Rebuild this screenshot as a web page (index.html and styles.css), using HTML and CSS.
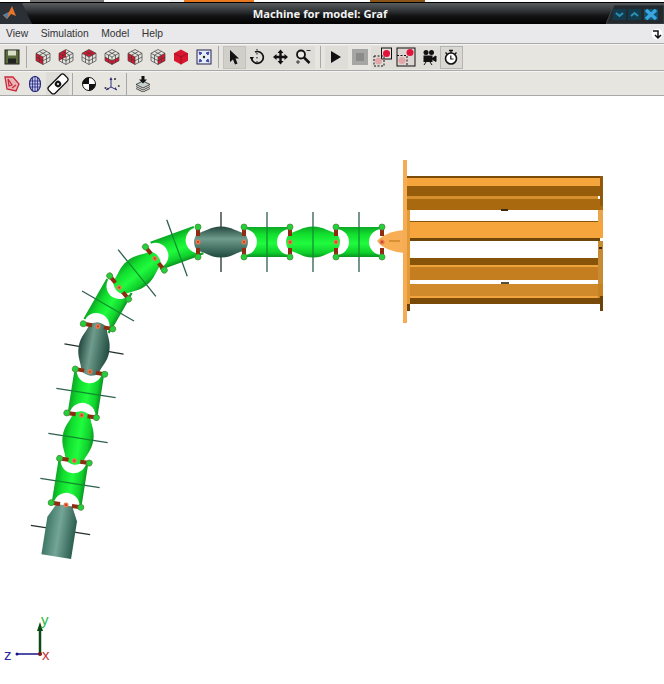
FILE: index.html
```html
<!DOCTYPE html>
<html lang="en">
<head>
<meta charset="utf-8">
<title>Machine for model: Graf</title>
<link rel="stylesheet" href="styles.css">
</head>
<body>
<svg class="sprites" aria-hidden="true">
  <defs>
    <symbol id="wire" viewBox="0 0 16 16">
      <path d="M8 .5 15 4.300V11.700L8 15.500 1 11.700V4.300ZM1 4.300 8 8 15 4.300M8 8V15.500M4.500 2.400 11.500 6.200M11.500 2.400 4.500 6.200M4.500 6.200V13.600M11.500 6.200V13.600M1 8 8 11.700 15 8" fill="none" stroke="#3d3d3d" stroke-width=".7"/>
    </symbol>
  </defs>
</svg>

<div class="strip">
  <span class="s s1"></span><span class="s s2"></span><span class="s s3"></span><span class="s s4"></span><span class="s s5"></span><span class="s s6"></span><span class="s s7"></span>
</div>
<header class="titlebar">
  <div class="logo">
    <svg width="32" height="21" viewBox="0 0 32 21"><path d="M0 0H22L32 21H0Z" fill="#2b3036"/><path d="M3 12 9 9 12 3 16 13 11 11 7 16Z" fill="#e8742a"/><path d="M3 12 9 9 7 16Z" fill="#4f7fa6"/></svg>
  </div>
  <div class="title">Machine for model: Graf</div>
  <div class="winbtns">
    <svg width="58" height="21" viewBox="0 0 58 21"><path d="M0 21 8 2H58V21Z" fill="#23292d" stroke="#4c5256" stroke-width=".8"/><rect x="7" y="6" width="13" height="11" fill="#123c4e"/><path d="M10 10 13.500 13 17 10" fill="none" stroke="#2d8fb5" stroke-width="2"/><rect x="22" y="6" width="13" height="11" fill="#123c4e"/><path d="M25 13 28.500 10 32 13" fill="none" stroke="#2d8fb5" stroke-width="2"/><rect x="38" y="6" width="14" height="11" fill="#12506c"/><path d="M40 7 50 16M50 7 40 16" stroke="#3aa6df" stroke-width="3.500"/></svg>
  </div>
</header>

<nav class="menubar">
  <span class="menu">View</span><span class="menu">Simulation</span><span class="menu">Model</span><span class="menu">Help</span>
  <svg class="dock" width="12" height="12" viewBox="0 0 12 12"><circle cx="6" cy="6" r="5.500" fill="#fff"/><path d="M2 3H7V9M4 7 7 10 10 7" fill="none" stroke="#111" stroke-width="1.500"/></svg>
</nav>

<div class="toolbar row1">
  <button class="tool"><svg viewBox="0 0 16 16"><rect x="1" y="1" width="14" height="14" fill="#5b6b3a" stroke="#222"/><rect x="4" y="1.500" width="8" height="5" fill="#d9e0c6"/><rect x="4" y="9.500" width="8" height="5" fill="#222"/></svg></button>
  <span class="sep"></span>
  <button class="tool"><svg viewBox="0 0 16 16"><path d="M8 .5 15 4.300V11.700L8 15.500 1 11.700V4.300Z" fill="#e3e3de"/><path d="M1 4.300 8 8V15.500L1 11.700Z" class="red"/><use href="#wire"/></svg></button>
  <button class="tool"><svg viewBox="0 0 16 16"><path d="M8 .5 15 4.300V11.700L8 15.500 1 11.700V4.300Z" fill="#e3e3de"/><path d="M8 .5 1 4.300V11.700L8 8Z" class="red"/><use href="#wire"/></svg></button>
  <button class="tool"><svg viewBox="0 0 16 16"><path d="M8 .5 15 4.300V11.700L8 15.500 1 11.700V4.300Z" fill="#e3e3de"/><path d="M8 .5 15 4.300 8 8 1 4.300Z" class="red"/><use href="#wire"/></svg></button>
  <button class="tool"><svg viewBox="0 0 16 16"><path d="M8 .5 15 4.300V11.700L8 15.500 1 11.700V4.300Z" fill="#e3e3de"/><path d="M1 8 8 11.700 15 8V11.700L8 15.500 1 11.700Z" class="red"/><use href="#wire"/></svg></button>
  <button class="tool"><svg viewBox="0 0 16 16"><path d="M8 .5 15 4.300V11.700L8 15.500 1 11.700V4.300Z" fill="#e3e3de"/><path d="M1 4.300 8 8V15.500L1 11.700Z" class="red"/><use href="#wire"/></svg></button>
  <button class="tool"><svg viewBox="0 0 16 16"><path d="M8 .5 15 4.300V11.700L8 15.500 1 11.700V4.300Z" fill="#e3e3de"/><path d="M15 4.300 8 8V15.500L15 11.700Z" class="red"/><use href="#wire"/></svg></button>
  <button class="tool"><svg viewBox="0 0 16 16"><path d="M8 .5 15 4.300V11.700L8 15.500 1 11.700V4.300Z" fill="#d8172f"/><path d="M1 4.300 8 8 15 4.300M8 8V15.500" fill="none" stroke="#8f1020" stroke-width=".8"/></svg></button>
  <button class="tool"><svg viewBox="0 0 16 16"><rect x="1" y="1" width="14" height="14" fill="#e8ecf4" stroke="#23234e"/><path d="M3 3 6 4 4 6ZM13 3 10 4 12 6ZM3 13 4 10 6 12ZM13 13 12 10 10 12Z" fill="#3c4fb0" stroke="#3c4fb0"/><circle cx="8" cy="8" r="1.200" fill="#222"/></svg></button>
  <span class="sep"></span>
  <button class="tool pressed"><svg viewBox="0 0 16 16"><path d="M3 1 12 9.500H8.500L10.500 14.500 8 15.500 6 10.500 3 13Z" fill="#111"/></svg></button>
  <button class="tool hint"><svg viewBox="0 0 16 16"><path d="M1.500 9A5.900 5.900 0 1 0 5 3" fill="none" stroke="#111" stroke-width="1.700"/><path d="M-.5 8H4L1.700 11.500Z" fill="#111"/><path d="M7 0V16" stroke="#111" stroke-dasharray="1.500 2.500"/></svg></button>
  <button class="tool hint"><svg viewBox="0 0 16 16"><path d="M7.500 .5 10.500 4H8.700V6.800H11.500V5L15 8 11.500 11V9.200H8.700V12H10.500L7.500 15.500 4.500 12H6.300V9.200H3.500V11L0 8 3.500 5V6.800H6.300V4H4.500Z" fill="#111"/></svg></button>
  <button class="tool hint"><svg viewBox="0 0 16 16"><circle cx="5" cy="5.500" r="4" fill="#e8e8e4" stroke="#111" stroke-width="1.800"/><path d="M8 8.500 13.500 14" stroke="#111" stroke-width="2.500"/><path d="M0 13H4M2 11V15M10.500 1.500H14.500" stroke="#333"/></svg></button>
  <span class="sep wide"></span>
  <button class="tool hint"><svg viewBox="0 0 16 16"><path d="M2 2 12 8 2 14Z" fill="#111"/></svg></button>
  <button class="tool"><svg viewBox="0 0 16 16"><rect x="0" y="0" width="16" height="16" fill="#a6a6a4"/><rect x="4" y="4" width="8" height="8" fill="#8b8b8a"/></svg></button>
  <button class="tool hint"><svg viewBox="0 0 20 20"><rect x="8.500" y="1" width="10" height="11" fill="#e6dcd8" stroke="#111"/><circle cx="13.500" cy="6.500" r="3.500" fill="#e3123a"/><rect x="1" y="9" width="10" height="10" fill="none" stroke="#111" stroke-dasharray="2 1.500"/><circle cx="5.500" cy="14" r="3.500" fill="#e2a6a8"/></svg></button>
  <button class="tool hint"><svg viewBox="0 0 20 20"><rect x="1" y="1" width="18" height="18" fill="#dcd6d2" stroke="#111"/><circle cx="14" cy="5.500" r="3.500" fill="#e3123a"/><path d="M1 8.500H11V19" fill="none" stroke="#111" stroke-dasharray="2 1.500"/><circle cx="6" cy="13.500" r="3.500" fill="#e2a6a8"/></svg></button>
  <button class="tool hint"><svg viewBox="0 0 16 16"><circle cx="5" cy="3.500" r="2.500" fill="#111"/><circle cx="10.500" cy="3.500" r="2.500" fill="#111"/><rect x="2.500" y="6.500" width="9" height="6.500" fill="#111"/><path d="M11.500 9 15 7V12.500L11.500 10.500ZM5 13 3 16M9 13 11 16" fill="#111" stroke="#111"/></svg></button>
  <button class="tool framed"><svg viewBox="0 0 16 16"><circle cx="7" cy="9.500" r="5.500" fill="#fff" stroke="#111" stroke-width="1.600"/><path d="M5 1.500H9M7 2V4M1.500 3.500 3 5M12.500 3.500 11 5" stroke="#111" stroke-width="1.300"/><path d="M6.800 6.500V10H9.500" fill="none" stroke="#111" stroke-width="1.200"/></svg></button>
</div>

<div class="toolbar row2">
  <button class="tool"><svg viewBox="0 0 16 16"><path d="M1 1H9L15 8 12 15 3 13Z" fill="#eab4b4" stroke="#c9283c" stroke-width="1.300"/><path d="M4 3 8 9 5 10ZM8 12 12 9" fill="none" stroke="#c9283c" stroke-width="1.200"/></svg></button>
  <button class="tool"><svg viewBox="0 0 16 16"><ellipse cx="8" cy="8" rx="5.500" ry="7.500" fill="#c9cff0" stroke="#23237a" stroke-width="1.100"/><path d="M2.500 5H13.500M2.500 8H13.500M2.500 11H13.500M5.500 1.500V14.500M8 .5V15.500M10.500 1.500V14.500" fill="none" stroke="#23237a" stroke-width=".8"/></svg></button>
  <button class="tool hint wide-ico"><svg viewBox="0 0 22 22"><g transform="rotate(-45 11 11)"><rect x="0" y="6.500" width="22" height="9" rx="2.500" fill="#fff" stroke="#111" stroke-width="1.300"/><circle cx="11" cy="11" r="3.200" fill="#111"/><circle cx="11" cy="11" r="1.200" fill="#ddd"/></g></svg></button>
  <span class="sep"></span>
  <button class="tool"><svg viewBox="0 0 16 16"><circle cx="8" cy="8" r="6.500" fill="#fff"/><path d="M8 1.500A6.500 6.500 0 0 0 1.500 8H8ZM8 8V14.500A6.500 6.500 0 0 0 14.500 8Z" fill="#111"/><circle cx="8" cy="8" r="6.500" fill="none" stroke="#111"/></svg></button>
  <button class="tool"><svg viewBox="0 0 16 16"><path d="M7 2.500V11L2 14M7 11 13 14" fill="none" stroke="#30307a"/><path d="M7 1 5.500 4H8.500ZM2 14 4 11.500 5 13.500ZM13 14 10.500 13 11.500 11Z" fill="#30307a"/><path d="M10 2 12 4M12 2 10 4M14 9 15.500 11M15.500 9 14 11" stroke="#333" stroke-width=".8"/><circle cx="1.500" cy="12" r="1" fill="#333"/></svg></button>
  <span class="sep"></span>
  <button class="tool"><svg viewBox="0 0 16 16"><path d="M8 5 15 8.500 8 12 1 8.500Z" fill="#c8d0d0" stroke="#222" stroke-width=".8"/><path d="M1 10.500 8 14 15 10.500M1 12.500 8 16 15 12.500" fill="none" stroke="#222" stroke-width=".8"/><path d="M6.500 0H9.500V3.500H12L8 7.500 4 3.500H6.500Z" fill="#111"/></svg></button>
</div>

<main class="viewport">
  <svg class="scene" viewBox="0 96 664 588" width="664" height="588">
    <defs>
      <linearGradient id="green" x1="0" y1="0" x2="0" y2="1">
        <stop offset="0" stop-color="#0ca826"/>
        <stop offset=".25" stop-color="#12e02e"/>
        <stop offset=".55" stop-color="#20fb3e"/>
        <stop offset=".85" stop-color="#10d02c"/>
        <stop offset="1" stop-color="#0a9422"/>
      </linearGradient>
      <linearGradient id="teal" x1="0" y1="0" x2="0" y2="1">
        <stop offset="0" stop-color="#24473f"/>
        <stop offset=".4" stop-color="#6f9c8c"/>
        <stop offset="1" stop-color="#1f4a3e"/>
      </linearGradient>
      <linearGradient id="tealside" x1="0" y1="0" x2="1" y2="0">
        <stop offset="0" stop-color="#3f7766"/>
        <stop offset=".45" stop-color="#74a596"/>
        <stop offset="1" stop-color="#2c5e50"/>
      </linearGradient>
      <g id="joint">
        <path d="M0-13V-6M0 6V13" stroke="#8e2c10" stroke-width="4"/>
        <circle cx="0" cy="-15" r="3" fill="#22d03a" stroke="#4a8a3a" stroke-width=".8"/>
        <circle cx="0" cy="15" r="3" fill="#22d03a" stroke="#4a8a3a" stroke-width=".8"/>
        <circle cx="0" cy="0" r="2.500" fill="#e4794f"/>
        <circle cx="0" cy="0" r="1" fill="#c23a1c"/>
      </g>
      <path id="linkbody" d="M-23-15H23V-13A13 13 0 0 0 23 13V15H-23V13A13 13 0 0 0-23-13Z"/>
      <path id="bulgebody" d="M-23-9C-16-10-11-15.500 0-15.500 11-15.500 16-10 23-9Q27-5 27 0 27 5 23 9C16 10 11 15.500 0 15.500-11 15.500-16 10-23 9Q-27 5-27 0-27-5-23-9Z"/>
      <g id="link">
        <path d="M0-30V30" class="axle"/>
        <use href="#linkbody" fill="url(#green)"/>
        <path d="M0-15V15" class="axle-in"/>
      </g>
      <g id="bulge">
        <path d="M0-30V30" class="axle"/>
        <use href="#bulgebody" fill="url(#green)"/>
        <path d="M0-15V15" class="axle-in"/>
        <use href="#joint" x="-23"/>
        <use href="#joint" x="23"/>
      </g>
      <g id="bulgedark">
        <path d="M0-30V30" class="axle dark"/>
        <use href="#bulgebody" fill="url(#teal)"/>
        <use href="#joint" x="-23"/>
        <use href="#joint" x="23"/>
      </g>
    </defs>

    <!-- gripper -->
    <path d="M377 241C382 235 392 231 405 230V253C392 252 382 248 377 241Z" fill="#f7ae55"/>
    <rect x="389" y="240" width="11" height="2" fill="#d98f35"/>
    <rect x="403" y="160" width="4" height="163" fill="#f4ad55"/>
    <rect x="407" y="176" width="196" height="2" fill="#7a4c08"/>
    <rect x="407" y="178" width="196" height="8" fill="#f5a53c"/>
    <rect x="407" y="186" width="196" height="10" fill="#955d0b"/>
    <rect x="407" y="196" width="191" height="3" fill="#d68f2c"/>
    <rect x="407" y="199" width="196" height="11" fill="#a9690f"/>
    <rect x="410" y="221" width="188" height="1" fill="#8a560a"/>
    <rect x="407" y="222" width="196" height="16" fill="#f5a53c"/>
    <rect x="410" y="238" width="190" height="3" fill="#6f4508"/>
    <rect x="410" y="258" width="190" height="7" fill="#87540a"/>
    <rect x="407" y="265" width="196" height="2" fill="#eea33c"/>
    <rect x="407" y="267" width="196" height="13" fill="#c47e1f"/>
    <rect x="410" y="284" width="190" height="12" fill="#d08a2b"/>
    <rect x="407" y="296" width="196" height="2" fill="#f2a53f"/>
    <rect x="407" y="298" width="196" height="6" fill="#7a4a08"/>
    <rect x="407" y="210" width="3" height="94" fill="#e39a36"/>
    <rect x="598" y="210" width="5" height="12" fill="#e9a548"/>
    <rect x="600" y="176" width="3" height="30" fill="#91590b"/>
    <rect x="598" y="241" width="5" height="43" fill="#c98a34"/>
    <rect x="598" y="284" width="5" height="14" fill="#c68220"/>
    <rect x="407" y="304" width="3" height="7" fill="#6d4208"/>
    <rect x="600" y="296" width="3" height="15" fill="#6d4208"/>
    <rect x="501" y="209" width="7" height="2" fill="#3c2a10"/>
    <rect x="501" y="282" width="8" height="2" fill="#5a4b33"/>
    <rect x="599" y="247" width="3" height="2" fill="#3c2a10"/>

    <!-- arm: links first, so the rounded bulge caps sit on top of them -->
    <use href="#link" transform="translate(359 242)"/>
    <use href="#link" transform="translate(267 242)"/>
    <use href="#link" transform="translate(177 248) rotate(-20)"/>
    <use href="#link" transform="translate(108 306) rotate(-60)"/>
    <use href="#link" transform="translate(86 393) rotate(-81)"/>
    <use href="#link" transform="translate(70 483) rotate(-81)"/>
    <use href="#bulge" transform="translate(313 242)"/>
    <use href="#bulgedark" transform="translate(221 242)"/>
    <use href="#bulge" transform="translate(137 273) rotate(-39)"/>
    <use href="#bulgedark" transform="translate(94 349) rotate(-80)"/>
    <use href="#bulge" transform="translate(78 438) rotate(-81)"/>
    <use href="#joint" transform="translate(382 242)"/>
    <g transform="translate(60 533) rotate(9)">
      <path d="M-30-3H30" class="axle dark"/>
      <path d="M-8-28H8L15-14V24H-15V-14Z" fill="url(#tealside)"/>
    </g>
    <use href="#joint" transform="translate(66 505) rotate(-81)"/>

    <!-- axes -->
    <path d="M40 654V630" class="ax-y"/>
    <path d="M40 622 37 631H43Z" fill="#0c4a14"/>
    <path d="M40 654H16" class="ax-z"/>
    <circle cx="17" cy="654" r="1.500" fill="#14148a"/>
    <circle cx="40" cy="654" r="2" fill="#7a1418"/>
    <text x="41" y="625" class="lbl lbl-y">y</text>
    <text x="42" y="660" class="lbl lbl-x">x</text>
    <text x="4" y="660" class="lbl lbl-z">z</text>
  </svg>
</main>
</body>
</html>
```

FILE: styles.css
```css
html, body {
  margin: 0;
  padding: 0;
  width: 664px;
  height: 684px;
  overflow: hidden;
  background: #fff;
  font-family: "Liberation Sans", Arial, sans-serif;
}
.sprites { position: absolute; width: 0; height: 0; }

.strip {
  display: flex;
  height: 2px;
  background: #fff;
  border-bottom: 1px solid #000;
}
.s { display: block; height: 2px; }
.s1 { width: 30px; background: #fff; }
.s2 { width: 74px; background: #777; }
.s3 { width: 66px; background: #fff; }
.s4 { width: 14px; background: #eee; }
.s5 { width: 70px; background: #e9781f; }
.s6 { width: 116px; background: #fff; }
.s7 { width: 55px; background: #8a5418; }

.titlebar {
  display: flex;
  align-items: center;
  height: 21px;
  background: linear-gradient(#5a5d60 0, #34373a 35%, #141516 60%, #000 100%);
}
.logo { width: 32px; height: 21px; flex: none; }
.logo svg, .winbtns svg { display: block; }
.title {
  flex: 1;
  padding-left: 2px;
  text-align: center;
  color: #f2f2f2;
  font: bold 11.200px "Noto Sans", sans-serif;
}
.winbtns { width: 58px; height: 21px; flex: none; }

.menubar {
  display: flex;
  align-items: center;
  height: 20px;
  padding-left: 6px;
  background: #e9e9ec;
  border-bottom: 1px solid #a9a9a9;
  box-sizing: border-box;
  font-size: 10.300px;
  color: #333;
}
.menu { margin-right: 12.500px; }
.dock { margin-left: auto; margin-right: 1px; }

.toolbar {
  display: flex;
  align-items: center;
  background: #e6e5e0;
  border-bottom: 1px solid #a9a9a9;
  box-sizing: border-box;
  border-top: 1px solid #f4f4f2;
}
.row1 { height: 27px; padding-bottom: 1px; }
.row2 { height: 25px; }
.tool {
  width: 23px;
  height: 23px;
  padding: 0;
  border: 0;
  background: transparent;
  display: flex;
  align-items: center;
  justify-content: center;
  flex: none;
}
.tool svg { width: 16px; height: 16px; display: block; }
.row1 .tool:nth-last-child(4) svg, .row1 .tool:nth-last-child(3) svg { width: 20px; height: 20px; }
.wide-ico.tool svg { width: 22px; height: 22px; }
.hint { background: #dfddd8; }
.pressed { background: #d0cfca; box-shadow: inset 0 0 0 1px #c2c1bc; }
.framed { background: #d9d8d3; box-shadow: inset 0 0 0 1px #b5b5b8; }
.sep {
  width: 8px;
  flex: none;
  height: 22px;
  background: linear-gradient(#a8a8a8, #a8a8a8) no-repeat 3px 0 / 1px 100%;
}
.wide { width: 10px; background-position: 5px 0; }
.red { fill: #d8172f; }

.viewport { height: 588px; background: #fff; }
.scene { display: block; }
.axle { stroke: #2e5f4d; stroke-width: 1.300; fill: none; }
.axle.dark { stroke: #22302c; }
.axle-in { stroke: #128a30; stroke-width: 1.200; fill: none; }
.ax-y { stroke: #0c4a14; stroke-width: 2.500; fill: none; }
.ax-z { stroke: #14148a; stroke-width: 1.500; fill: none; }
.lbl { font: 15px "Liberation Sans", sans-serif; }
.lbl-y { fill: #2db84a; }
.lbl-x { fill: #c8343c; }
.lbl-z { fill: #2a2aa0; }
```
